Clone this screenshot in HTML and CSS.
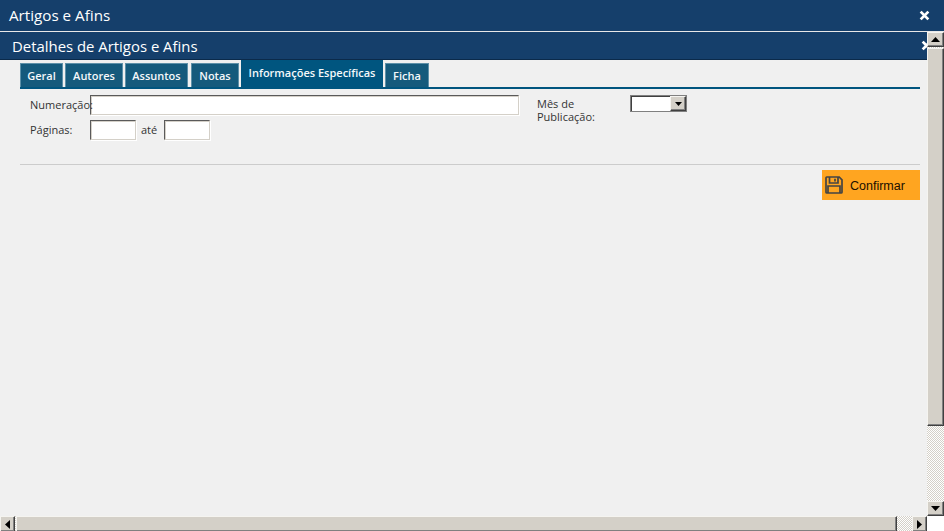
FILE: index.html
```html
<!DOCTYPE html>
<html lang="pt">
<head>
<meta charset="utf-8">
<title>Artigos e Afins</title>
<link rel="stylesheet" href="styles.css">
</head>
<body>
<div class="app">
  <header class="bar bar-main">
    <span class="bar-title">Artigos e Afins</span>
    <svg class="close" viewBox="0 0 10 10"><path d="M1.5 1.5l7 7M8.5 1.5l-7 7"/></svg>
  </header>
  <div class="view">
    <main class="panel">
      <div class="bar bar-sub">
        <span class="bar-title">Detalhes de Artigos e Afins</span>
        <svg class="close" viewBox="0 0 10 10"><path d="M1.5 1.5l7 7M8.5 1.5l-7 7"/></svg>
      </div>
      <div class="content">
        <nav class="tabs">
          <a class="tab tab-geral">Geral</a>
          <a class="tab tab-autores">Autores</a>
          <a class="tab tab-assuntos">Assuntos</a>
          <a class="tab tab-notas">Notas</a>
          <a class="tab active">Informações Específicas</a>
          <a class="tab tab-ficha">Ficha</a>
        </nav>
        <form class="form">
          <div class="col-left">
            <div class="row row-num">
              <label class="lab">Numeração:</label>
              <span class="input input-wide"></span>
            </div>
            <div class="row row-pag">
              <label class="lab">Páginas:</label>
              <span class="input input-small"></span>
              <span class="ate">até</span>
              <span class="input input-small"></span>
            </div>
          </div>
          <div class="col-right">
            <label class="lab lab-mes">Mês de Publicação:</label>
            <span class="select">
              <span class="select-field"></span>
              <span class="btn3d select-btn"><svg class="arrow" viewBox="0 0 7 4"><path d="M0 0h7L3.5 4z"/></svg></span>
            </span>
          </div>
        </form>
        <hr class="rule">
        <div class="actions">
          <button type="button" class="confirm">
            <svg class="save" viewBox="0 0 18 18"><path d="M1.8 1h12.4L17 3.8v12.4a.8.8 0 0 1-.8.8H1.8a.8.8 0 0 1-.8-.8V1.800a.8.8 0 0 1 .8-.8zM4.500 1.500v5.500h8.500V1.500M10 2.800v2.800M3 17v-7h12V17"/></svg>
            <span>Confirmar</span>
          </button>
        </div>
      </div>
    </main>
    <div class="vscroll">
      <span class="btn3d sb-btn"><svg class="arrow" viewBox="0 0 9 5"><path d="M4.500 0L9 5H0z"/></svg></span>
      <span class="btn3d vthumb"></span>
      <span class="track"></span>
      <span class="btn3d sb-btn"><svg class="arrow" viewBox="0 0 9 5"><path d="M0 0h9L4.500 5z"/></svg></span>
    </div>
    <div class="hscroll">
      <span class="btn3d sb-btn-h"><svg class="arrow-h" viewBox="0 0 5 9"><path d="M5 0v9L0 4.500z"/></svg></span>
      <span class="btn3d hthumb"></span>
      <span class="track"></span>
      <span class="btn3d sb-btn-h"><svg class="arrow-h" viewBox="0 0 5 9"><path d="M0 0v9l5-4.500z"/></svg></span>
    </div>
    <div class="corner"></div>
  </div>
</div>
</body>
</html>
```
FILE: styles.css
```css
* { box-sizing: border-box; }
html, body { margin: 0; height: 100%; overflow: hidden; background: #fff; }
body { font-family: "Open Sans", "Noto Sans", "Liberation Sans", sans-serif; }
.app { width: 944px; height: 531px; display: flex; flex-direction: column; }
.bar { display: flex; align-items: center; color: #fff; background: #153f6b; flex: none; }
.bar-main { height: 31px; padding: 0 14px 1px 9px; justify-content: space-between; }
.bar-main .bar-title { font-size: 15.200px; }
.bar-sub .bar-title { font-size: 14.900px; }
.bar-sub { width: 944px; height: 28px; padding: 0 12px 0 12px; justify-content: space-between; border-bottom: 1px solid #0b2a4a; }
.close { width: 11px; height: 11px; fill: none; stroke: #fff; stroke-width: 2.500; }
.view { flex: 1; min-height: 0; display: grid; grid-template-columns: 927px 17px; grid-template-rows: 484px 16px; border-top: 1px solid #e8e8e8; }
.panel { overflow: hidden; background: #f0f0f0; min-width: 0; }
.content { padding: 0 7px 0 20px; width: 927px; }
.tabs { display: flex; align-items: flex-end; gap: 2px; height: 29px; border-bottom: 2px solid #00557f; }
.tab { display: flex; justify-content: center; align-items: center; height: 24px; background: #155a7c; color: #f4f8fa; font-size: 11px; font-weight: 600; border: 1px solid #5d90a8; border-bottom: 0; padding-top: 0; }
.tab.active { width: 142px; height: 27px; background: #00557f; border: 0; font-size: 11px; padding: 0 0 3px; }
.tab-geral { width: 43px; }
.tab-autores { width: 58px; }
.tab-assuntos { width: 63px; }
.tab-notas { width: 48px; margin-left: 1px; }
.tab-ficha { width: 44px; }
.form { display: flex; color: #333; font-size: 11px; padding-top: 6px; height: 75px; }
.col-left { width: 517px; display: flex; flex-direction: column; gap: 5px; padding-left: 10px; }
.row { display: flex; align-items: center; height: 20px; }
.lab { display: block; width: 60px; flex: none; white-space: nowrap; padding-bottom: 2px; position: relative; z-index: 1; }
.input { display: block; height: 20px; background: #fff; border: 1px solid; border-color: #5a5a5a #d4d0c8 #d4d0c8 #5a5a5a; box-shadow: 1px 1px 0 #fff, inset 1px 1px 0 #d4d0c8; }
.input-wide { width: 429px; }
.input-small { width: 46px; }
.ate { width: 28px; padding-left: 5px; padding-bottom: 2px; }
.col-right { display: flex; align-items: flex-start; }
.lab-mes { width: 93px; white-space: normal; line-height: 13px; padding: 2px 20px 0 0; }
.select { display: flex; width: 57px; height: 17px; border: 1px solid #808080; background: #fff; box-shadow: inset 1px 1px 0 #404040; }
.select-field { flex: 1; }
.select-btn { width: 16px; height: 15px; }
.btn3d { display: flex; align-items: center; justify-content: center; background: #d4d0c8; border: 1px solid; border-color: #f5f4f0 #404040 #404040 #f5f4f0; box-shadow: inset -1px -1px 0 #808080; flex: none; }
.arrow { width: 7px; height: 4px; fill: #000; }
.sb-btn .arrow { width: 9px; height: 5px; }
.rule { height: 1px; margin: 0; border: 0; background: #cccccc; }
.actions { display: flex; justify-content: flex-end; padding-top: 5px; }
.confirm { display: flex; align-items: center; width: 98px; height: 30px; padding: 2px 0 0 3px; border: 0; background: #ffa520; color: #201000; font: 12.500px "Liberation Sans", Arial, sans-serif; }
.save { width: 18px; height: 18px; margin: -2px 7px 0 0; fill: none; stroke: #444; stroke-width: 1.700; flex: none; }
.vscroll { display: flex; flex-direction: column; background: repeating-conic-gradient(#d4d0c8 0 25%, #fff 0 50%) 0 0 / 2px 2px; }
.sb-btn { width: 17px; height: 15px; }
.vthumb { width: 17px; height: 378px; margin-top: 1px; }
.track { flex: 1; }
.hscroll { display: flex; height: 16px; background: repeating-conic-gradient(#d4d0c8 0 25%, #fff 0 50%) 0 0 / 2px 2px; }
.sb-btn-h { width: 15px; height: 16px; }
.arrow-h { width: 5px; height: 9px; fill: #000; }
.hthumb { width: 881px; margin-left: 1px; height: 16px; }
.corner { background: #fff; }
```
